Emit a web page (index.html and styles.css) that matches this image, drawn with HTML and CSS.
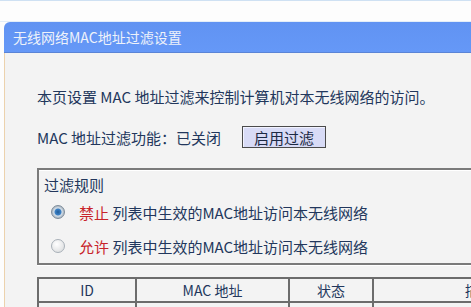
FILE: index.html
```html
<!DOCTYPE html>
<html lang="zh-CN">
<head>
  <meta charset="UTF-8" />
  <title>无线网络MAC地址过滤设置</title>
  <link rel="stylesheet" href="styles.css">
</head>
<body>
  <div class="top-strip"></div>
  <div class="panel">
    <div class="panel-title">无线网络MAC地址过滤设置</div>
    <div class="panel-body">
      <p class="intro">本页设置 MAC 地址过滤来控制计算机对本无线网络的访问。</p>
      <div class="status-row">
        <span>MAC 地址过滤功能：已关闭</span>
        <button class="btn">启用过滤</button>
      </div>

      <div class="rules">
        <div class="rules-title">过滤规则</div>
        <label class="rule">
          <span class="radio checked"></span>
          <span class="red">禁止</span>&nbsp;列表中生效的MAC地址访问本无线网络
        </label>
        <label class="rule">
          <span class="radio"></span>
          <span class="red">允许</span>&nbsp;列表中生效的MAC地址访问本无线网络
        </label>
      </div>

      <table class="mac-table">
        <tr>
          <th class="col-id">ID</th>
          <th class="col-mac">MAC 地址</th>
          <th class="col-state">状态</th>
          <th class="col-desc">描述</th>
        </tr>
        <tr>
          <td></td><td></td><td></td><td></td>
        </tr>
      </table>
    </div>
  </div>
</body>
</html>
```

FILE: styles.css
```css
html, body {
  overflow: hidden;
}

body {
  margin: 0;
  background: #fdfdfd;
  font-family: "Noto Sans CJK SC", "Noto Sans", sans-serif;
  color: #22375c;
  height: 307px;
}

.top-strip {
  height: 21px;
  border-top: 1px solid #cfe1f3;
  box-shadow: inset 0 -1px 0 #e4eef8;
}

.panel {
  margin-left: 4px;
}

.panel-title {
  height: 30px;
  line-height: 30px;
  padding-left: 9px;
  font-size: 14px;
  color: #eef2fa;
  background: linear-gradient(to bottom, #6193f2, #6598f7);
  border-radius: 6px 0 0 0;
  border-bottom: 1px solid #5a84d6;
}

.panel-body {
  box-sizing: border-box;
  height: 254px;
  overflow: hidden;
  background: #f3f3f3;
  border-left: 1px solid #ecd2ad;
  padding: 34px 0 0 32px;
  font-size: 15px;
}

.intro {
  margin: 0;
  line-height: 20px;
  white-space: nowrap;
}

.status-row {
  margin-top: 19px;
  display: flex;
  align-items: center;
  height: 22px;
}

.btn {
  margin-left: 21px;
  width: 84px;
  height: 22px;
  padding: 0;
  font-family: inherit;
  font-size: 15px;
  color: #1d2a44;
  background: #d8dbf6;
  border: 1px solid #4a4a4a;
  box-shadow: inset 1px 1px 0 #f2f3ff;
}

.rules {
  width: 480px;
  margin-top: 20px;
  border: 2px solid #7a7a7a;
  border-right: none;
  box-shadow: 0 1px 0 #fff, inset 0 1px 0 #fff;
  padding: 5px 0 0 5px;
}

.rules-title {
  line-height: 20px;
}

.rule {
  display: flex;
  align-items: center;
  height: 34px;
  white-space: nowrap;
}

.radio {
  width: 12px;
  height: 12px;
  margin: 0 14px 0 7px;
  border-radius: 50%;
  border: 1px solid #a8b0b8;
  background: radial-gradient(circle at 40% 35%, #ffffff, #d6d8da);
}

.radio.checked {
  border-color: #7d8c9a;
  background: radial-gradient(circle, #1f5c9a 0, #3d82c6 3px, #d5dfe8 4px, #aab6c2 6px);
}

.red {
  color: #c8232a;
}

.mac-table {
  width: 549px;
  table-layout: fixed;
  margin-top: 12px;
  border-collapse: collapse;
  font-size: 14px;
}

.mac-table th,
.mac-table td {
  border: 2px solid #6c6c6c;
  font-weight: normal;
  height: 22px;
  padding: 0;
  text-align: center;
}

.col-id { width: 96px; }
.col-mac { width: 151px; }
.col-state { width: 82px; }
.col-desc { width: 210px; }
```
